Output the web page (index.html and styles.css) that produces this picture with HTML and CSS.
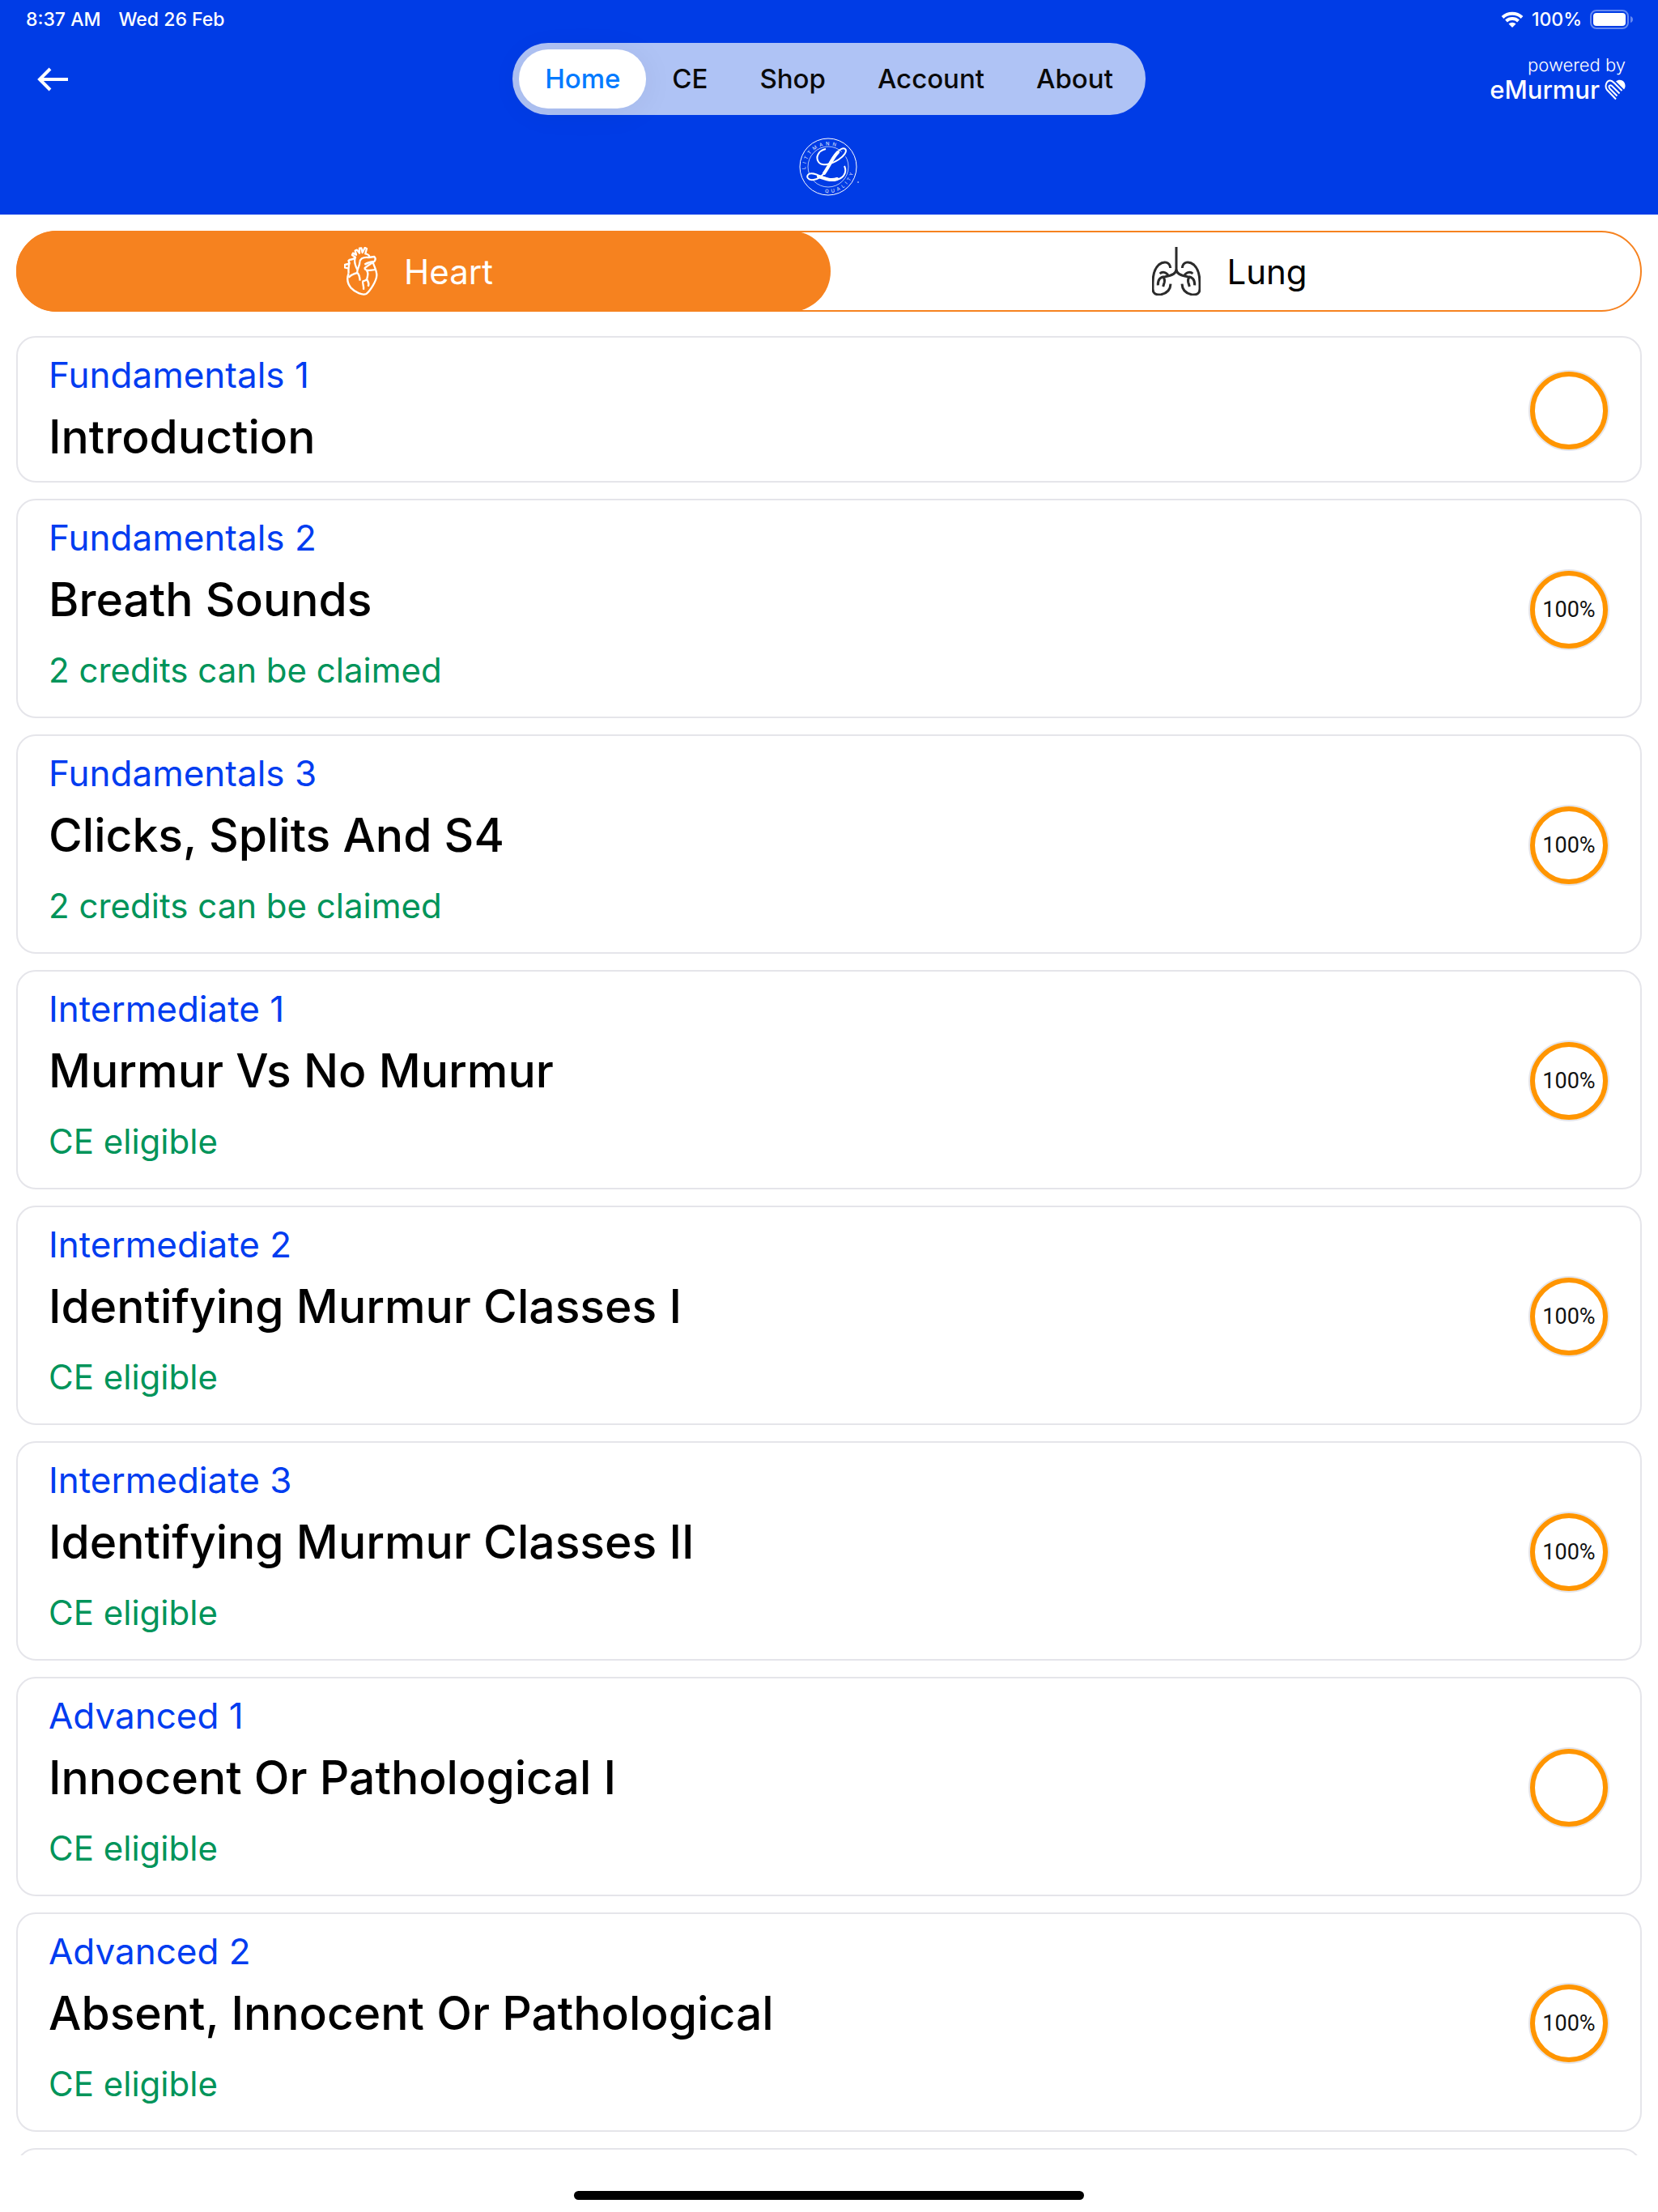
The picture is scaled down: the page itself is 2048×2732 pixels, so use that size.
FILE: index.html
```html
<!DOCTYPE html>
<html lang="en">
<head>
    <meta charset="UTF-8">
    <meta name="viewport" content="width=device-width, initial-scale=1.0">
    <title>Littmann Learning</title>
    <link rel="stylesheet" href="styles.css">
</head>
<body>
    <header>
        <div class="statusbar">
            <span>8:37 AM</span>
            <span>Wed 26 Feb</span>
            <div class="device">
                <svg class="wifi" viewBox="0 0 28 20" aria-hidden="true">
                    <path d="M2 7.500A17.500 17.500 0 0 1 26 7.500" />
                    <path d="M6.500 12A11 11 0 0 1 21.500 12" />
                    <path class="dot" d="M9.500 15.500A6.500 6.500 0 0 1 18.500 15.500L14 20Z" />
                </svg>
                <span>100%</span>
                <svg class="battery" viewBox="0 0 54 24" aria-hidden="true">
                    <rect class="case" x="1" y="1" width="46" height="22" rx="7" />
                    <rect x="4" y="4" width="40" height="16" rx="4" />
                    <path class="nub" d="M50 8Q53 9 53 12Q53 15 50 16Z" />
                </svg>
            </div>
        </div>
        <div class="toolbar">
            <a href="#" class="back" aria-label="Back">
                <svg viewBox="0 0 38 30" aria-hidden="true"><path d="M16 2L3 15L16 28M3 15H38" /></svg>
            </a>
            <nav>
                <a href="#" class="active">Home</a>
                <a href="#">CE</a>
                <a href="#">Shop</a>
                <a href="#">Account</a>
                <a href="#">About</a>
            </nav>
            <div class="powered">
                <small>powered by</small>
                <div class="brand">
                    eMurmur
                    <svg viewBox="0 0 26 26" aria-hidden="true">
                        <path class="fill" d="M14 2.500C17 0 22 0 24.500 4C26 7 26 10 24 12.500Z" />
                        <path d="M14 24.500L3 13C0 9 2 1.500 7 1.500C9 1.500 10.500 3 12 4.500L21.500 14" />
                        <path d="M18.500 17.500L9 8Q6.500 6.500 5.500 8.500Q5 10 6.500 11.500L15.500 20.500" />
                    </svg>
                </div>
            </div>
        </div>
        <svg class="logo" viewBox="0 0 76 74" role="img" aria-label="Littmann Quality">
            <defs>
                <path id="arc-top" d="M9 40A28 28 0 0 1 65 37" />
                <path id="arc-bottom" d="M33 69A32 32 0 0 0 66 24" />
            </defs>
            <circle cx="37" cy="37" r="35" />
            <circle class="thin" cx="37" cy="37" r="25" />
            <text><textPath href="#arc-top">L&nbsp; I&nbsp; T&nbsp; T&nbsp; M&nbsp; A&nbsp; N&nbsp; N</textPath></text>
            <text><textPath href="#arc-bottom">Q&nbsp; U&nbsp; A&nbsp; L&nbsp; I&nbsp; T&nbsp; Y</textPath></text>
            <path class="mask" d="M54 16L61 16L58 26L53 27ZM12 47L20 44L20 54L13 53ZM54 44L59 42L59 49Z" />
            <path class="hair" d="M34 15C25 17 21 25 25 31C29 37 41 34 50 28C56 24 61 18 58 15C54 12 45 20 39 32C34 42 29 52 19 53C12 54 9 49 13 46C20 42 31 53 44 53C55 53 61 45 57 36" />
            <path class="thick" d="M49 19C42 26 38 37 32 45M25 49C33 51 39 55 48 52" />
            <circle class="mark" cx="74" cy="56" r="1" />
        </svg>
    </header>

    <main>
        <div class="tabs" role="tablist">
            <button type="button" role="tab" aria-selected="true" class="selected">
                <svg class="heart" viewBox="0 0 126 180" aria-hidden="true">
                    <path d="M17 97C10 115 10 132 25 151C42 169 68 180 82 174C94 166 120 128 121 105C121 86 111 72 107 57" />
                    <path d="M17 97C14 77 22 62 17 50C23 43 34 51 42 38L30 30L33 23L45 29L41 14L48 11L57 23L57 5L64 4L68 21L77 3L84 6L79 25C92 27 96 35 91 39" />
                    <path d="M17 50C18 58 23 64 15 63L3 66L2 76L15 79M42 38C36 51 39 64 49 84M91 39L112 36Q120 44 112 54C99 55 87 58 76 65M58 54C61 42 72 37 91 39M58 54C60 69 46 84 49 96C38 99 25 103 17 113M49 96C57 102 58 112 59 125" />
                    <path d="M107 57Q88 69 77 78Q75 84 87 87C103 85 112 86 116 83M84 88C93 99 86 108 85 118Q83 124 70 127C67 138 75 145 72 158M84 119C90 130 94 136 89 146" />
                </svg>
                Heart
            </button>
            <button type="button" role="tab" aria-selected="false">
                <svg class="lung" viewBox="0 0 180 180" aria-hidden="true">
                    <path d="M90 0V82C90 102 67 108 48 110C30 110 21 122 22 142M90 82C90 102 113 108 132 110C150 110 159 122 158 142" />
                    <path d="M68 78C66 54 43 51 25 66C8 82 3 105 3 133V153C2 173 15 179 34 176C54 172 68 159 69 137" />
                    <path d="M112 78C114 54 137 51 155 66C172 82 177 105 177 133V153C178 173 165 179 146 176C126 172 112 159 111 137" />
                    <path d="M29 99C37 91 52 92 60 105M151 99C143 91 128 92 120 105M42 113Q48 119 46 130L41 147M138 113Q132 119 134 130L139 147" />
                </svg>
                Lung
            </button>
        </div>

        <div class="modules">
            <a href="#" class="card">
                <div>
                    <h3>Fundamentals 1</h3>
                    <h2>Introduction</h2>
                </div>
                <span class="progress"></span>
            </a>
            <a href="#" class="card">
                <div>
                    <h3>Fundamentals 2</h3>
                    <h2>Breath Sounds</h2>
                    <p>2 credits can be claimed</p>
                </div>
                <span class="progress">100%</span>
            </a>
            <a href="#" class="card">
                <div>
                    <h3>Fundamentals 3</h3>
                    <h2>Clicks, Splits And S4</h2>
                    <p>2 credits can be claimed</p>
                </div>
                <span class="progress">100%</span>
            </a>
            <a href="#" class="card">
                <div>
                    <h3>Intermediate 1</h3>
                    <h2>Murmur Vs No Murmur</h2>
                    <p>CE eligible</p>
                </div>
                <span class="progress">100%</span>
            </a>
            <a href="#" class="card">
                <div>
                    <h3>Intermediate 2</h3>
                    <h2>Identifying Murmur Classes I</h2>
                    <p>CE eligible</p>
                </div>
                <span class="progress">100%</span>
            </a>
            <a href="#" class="card">
                <div>
                    <h3>Intermediate 3</h3>
                    <h2>Identifying Murmur Classes II</h2>
                    <p>CE eligible</p>
                </div>
                <span class="progress">100%</span>
            </a>
            <a href="#" class="card">
                <div>
                    <h3>Advanced 1</h3>
                    <h2>Innocent Or Pathological I</h2>
                    <p>CE eligible</p>
                </div>
                <span class="progress"></span>
            </a>
            <a href="#" class="card">
                <div>
                    <h3>Advanced 2</h3>
                    <h2>Absent, Innocent Or Pathological</h2>
                    <p>CE eligible</p>
                </div>
                <span class="progress">100%</span>
            </a>
            <div class="card"></div>
        </div>
    </main>

    <footer><div class="home-indicator"></div></footer>
</body>
</html>
```

FILE: styles.css
```css
* {box-sizing: border-box;}
body {
    margin: 0;
    height: 100vh;
    display: flex;
    flex-direction: column;
    background: #ffffff;
    color: #000000;
    font-family: Inter, "Liberation Sans", sans-serif;
}
a {color: inherit; text-decoration: none;}
h2, h3, p {margin: 0; font-weight: 400;}
svg {display: block; fill: none; stroke: currentColor;}

/* Header */
header {background: #003ce6; color: #ffffff; padding-bottom: 22px;}
.statusbar {
    display: flex;
    align-items: center;
    gap: 22px;
    height: 48px;
    padding: 0 30px 0 32px;
    font-size: 23px;
    font-weight: 500;
}
.device {display: flex; align-items: center; gap: 10px; margin-left: auto;}
.wifi {width: 28px; height: 20px; stroke-width: 4;}
.wifi .dot {fill: currentColor; stroke: none;}
.battery {width: 54px; height: 24px; fill: currentColor; stroke: none;}
.battery .case {fill: none; stroke: #ffffff; stroke-width: 2; opacity: 0.4;}
.battery .nub {opacity: 0.4;}

.toolbar {
    display: grid;
    grid-template-columns: 1fr auto 1fr;
    align-items: center;
    padding: 5px 40px 0;
}
.back {padding-left: 6px;}
.back svg {width: 38px; height: 30px; stroke-width: 4;}
nav {display: flex; padding: 8px; border-radius: 44px; background: #afc3f5;}
nav a {
    padding: 0 32px;
    border-radius: 36px;
    color: #0a0a0a;
    font-size: 33px;
    font-weight: 500;
    line-height: 73px;
}
nav .active {background: #ffffff; color: #007aff; box-shadow: 0 4px 40px rgba(0, 0, 0, 0.06);}
.powered {justify-self: end; text-align: right;}
.powered small {display: block; font-size: 22px; font-weight: 300; line-height: 26px;}
.brand {display: flex; align-items: center; gap: 6px; font-size: 31px; font-weight: 500; line-height: 36px;}
.brand svg {width: 26px; height: 26px; stroke-width: 2;}
.brand .fill {fill: currentColor; stroke: none;}

.logo {width: 76px; height: 74px; margin: 27px auto 0; stroke-width: 1;}
.logo .thin {stroke-width: 1; opacity: 0.7;}
.logo text {fill: currentColor; stroke: none; font-size: 6px; opacity: 0.9;}
.logo .mask {fill: #003ce6; stroke: none;}
.logo .hair {stroke-width: 2;}
.logo .thick {stroke-width: 4; stroke-linecap: round;}
.logo .mark {fill: currentColor; stroke: none; opacity: 0.6;}

/* Heart / Lung switch */
main {flex: 1; min-height: 0; overflow: hidden; padding: 20px 20px 0;}
.tabs {display: flex; height: 100px; border: 2px solid #f6821f; border-radius: 50px;}
.tabs button {
    flex: 1;
    display: flex;
    align-items: center;
    justify-content: center;
    gap: 32px;
    margin: -2px;
    padding: 0 12px 0 0;
    border: 0;
    border-radius: 50px;
    background: none;
    color: #000000;
    font: inherit;
    font-size: 42px;
}
.tabs .selected {background: #f6821f; color: #ffffff;}
.heart {width: 42px; height: 60px; stroke-width: 7; stroke-linejoin: round;}
.lung {width: 60px; height: 60px; stroke-width: 9; color: #2b2b2b;}

/* Module list */
.modules {display: flex; flex-direction: column; gap: 20px; padding-top: 30px;}
.card {
    display: flex;
    align-items: center;
    justify-content: space-between;
    min-height: 181px;
    padding: 15px 40px 12px 38px;
    border: 2px solid #e5e5ea;
    border-radius: 24px;
}
.card h3 {color: #003cf0; font-size: 44px; line-height: 62px;}
.card h2 {padding-top: 4px; font-size: 57px; font-weight: 500; line-height: 84px;}
.card p {color: #00945a; font-size: 42px; line-height: 90px;}
.progress {
    display: flex;
    align-items: center;
    justify-content: center;
    width: 96px;
    height: 96px;
    border: 6px solid #ff9500;
    border-radius: 50%;
    box-shadow: 0 0 0 2px #e5e5ea;
    color: #111111;
    font-family: Roboto, "Liberation Sans", sans-serif;
    font-size: 27px;
}

footer {display: flex; justify-content: center; align-items: flex-end; height: 70px; padding-bottom: 15px;}
.home-indicator {width: 630px; height: 11px; border-radius: 6px; background: #000000;}
```
